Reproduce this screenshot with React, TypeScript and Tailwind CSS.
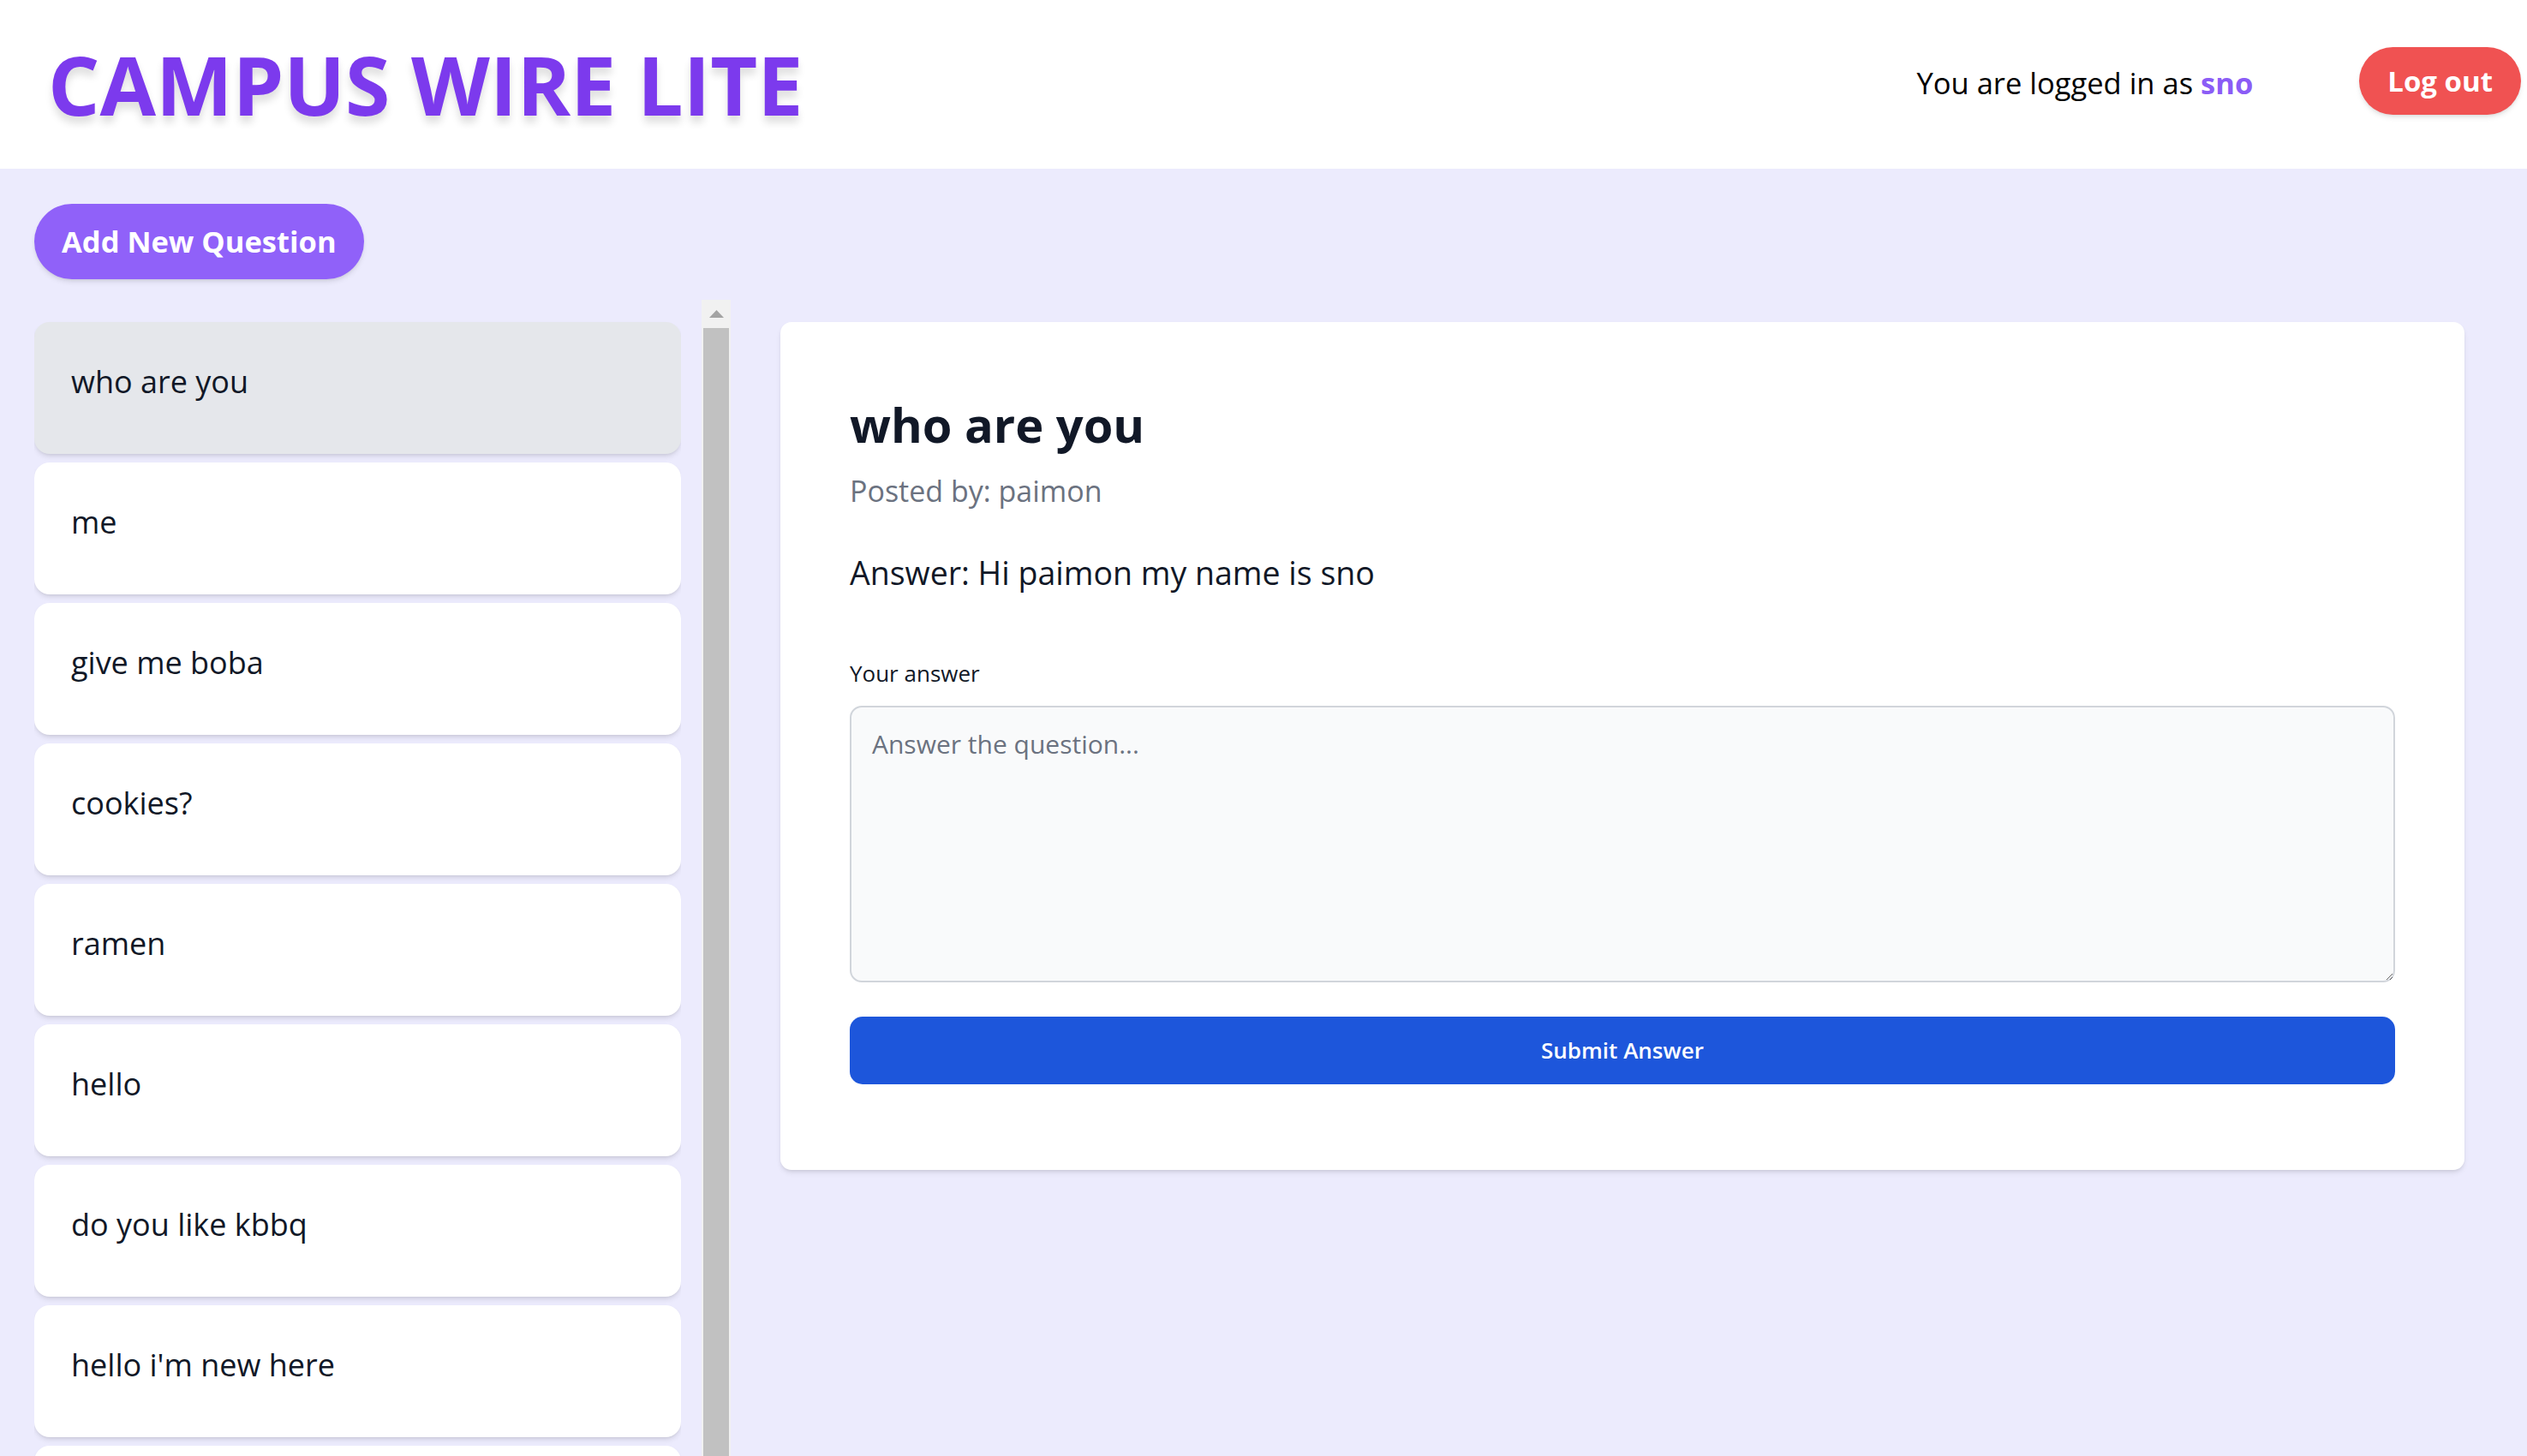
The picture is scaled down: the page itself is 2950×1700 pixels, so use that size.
const QUESTIONS = [
  "who are you",
  "me",
  "give me boba",
  "cookies?",
  "ramen",
  "hello",
  "do you like kbbq",
  "hello i'm new here",
  "what's for lunch",
];

export default function App() {
  const selected = 0;

  return (
    <div className="h-[1700px] w-full overflow-hidden flex flex-col bg-[#ecebfd] font-['Open_Sans',sans-serif]">
      {/* Header */}
      <header className="h-[197px] shrink-0 bg-white flex items-center justify-between pl-[56px] pr-[7px]">
        <h1 className="text-[95px] font-bold leading-none text-[#7c3aed] [text-shadow:0_8px_10px_rgba(0,0,0,0.13)]">
          CAMPUS WIRE LITE
        </h1>
        <div className="flex items-center gap-[124px] mb-[8px]">
          <p className="text-[34.5px] text-black mt-[4px]">
            You are logged in as{" "}
            <span className="font-bold text-[#8b5cf6]">sno</span>
          </p>
          <button className="h-[79px] px-[33px] rounded-full bg-[#f05252] text-white text-[33px] font-bold shadow-md">
            Log out
          </button>
        </div>
      </header>

      <main className="flex-1 min-h-0 flex flex-col pl-[40px] pr-[73px] pt-[41px]">
        <div>
          <button className="h-[88px] px-[32px] rounded-full bg-[#9061f9] text-white text-[34.5px] font-bold shadow-md">
            Add New Question
          </button>
        </div>

        <div className="flex-1 min-h-0 flex mt-[24px]">
          {/* Question list */}
          <div className="w-[813px] shrink-0 flex gap-[24px]">
            <div className="w-[755px] overflow-hidden pt-[26px] flex flex-col gap-[10px]">
              {QUESTIONS.map((q, i) => (
                <div
                  key={q}
                  className={`h-[154px] shrink-0 rounded-[18px] shadow-md flex items-center px-[43px] pb-[14px] text-[36px] text-[#111827] ${
                    i === selected ? "bg-[#e5e7eb]" : "bg-white"
                  }`}
                >
                  {q}
                </div>
              ))}
            </div>
            {/* scrollbar */}
            <div className="w-[34px] shrink-0 bg-[#f1f1f1] flex flex-col">
              <div className="h-[33px] shrink-0 flex items-center justify-center">
                <svg width="17" height="9" viewBox="0 0 17 9">
                  <polygon points="8.5,0 17,9 0,9" fill="#a3a3a3" />
                </svg>
              </div>
              <div className="flex-1 mx-[2px] bg-[#c1c1c1]" />
            </div>
          </div>

          {/* Question detail */}
          <div className="flex-1 ml-[58px] mt-[26px] self-start bg-white rounded-[13px] shadow-md px-[81px] pt-[84px] pb-[100px]">
            <h2 className="text-[56px] leading-[70px] font-bold text-[#111827]">
              who are you
            </h2>
            <p className="mt-[19px] text-[34px] leading-[48px] text-[#6b7280]">
              Posted by: paimon
            </p>
            <p className="mt-[48px] text-[37.5px] leading-[48px] text-[#111827]">
              Answer: Hi paimon my name is sno
            </p>
            <label className="block mt-[75px] text-[26px] leading-[36px] font-medium text-[#111827]">
              Your answer
            </label>
            <textarea
              placeholder="Answer the question..."
              className="block mt-[20px] w-full h-[323px] rounded-[14px] border-2 border-[#d1d5db] bg-[#f9fafb] px-[24px] pt-[20px] pb-[16px] text-[30px] text-[#111827] placeholder:text-[#6b7280] outline-none"
            />
            <button className="mt-[40px] w-full h-[79px] rounded-[15px] bg-[#1d56db] text-white text-[26px] font-semibold">
              Submit Answer
            </button>
          </div>
        </div>
      </main>
    </div>
  );
}
